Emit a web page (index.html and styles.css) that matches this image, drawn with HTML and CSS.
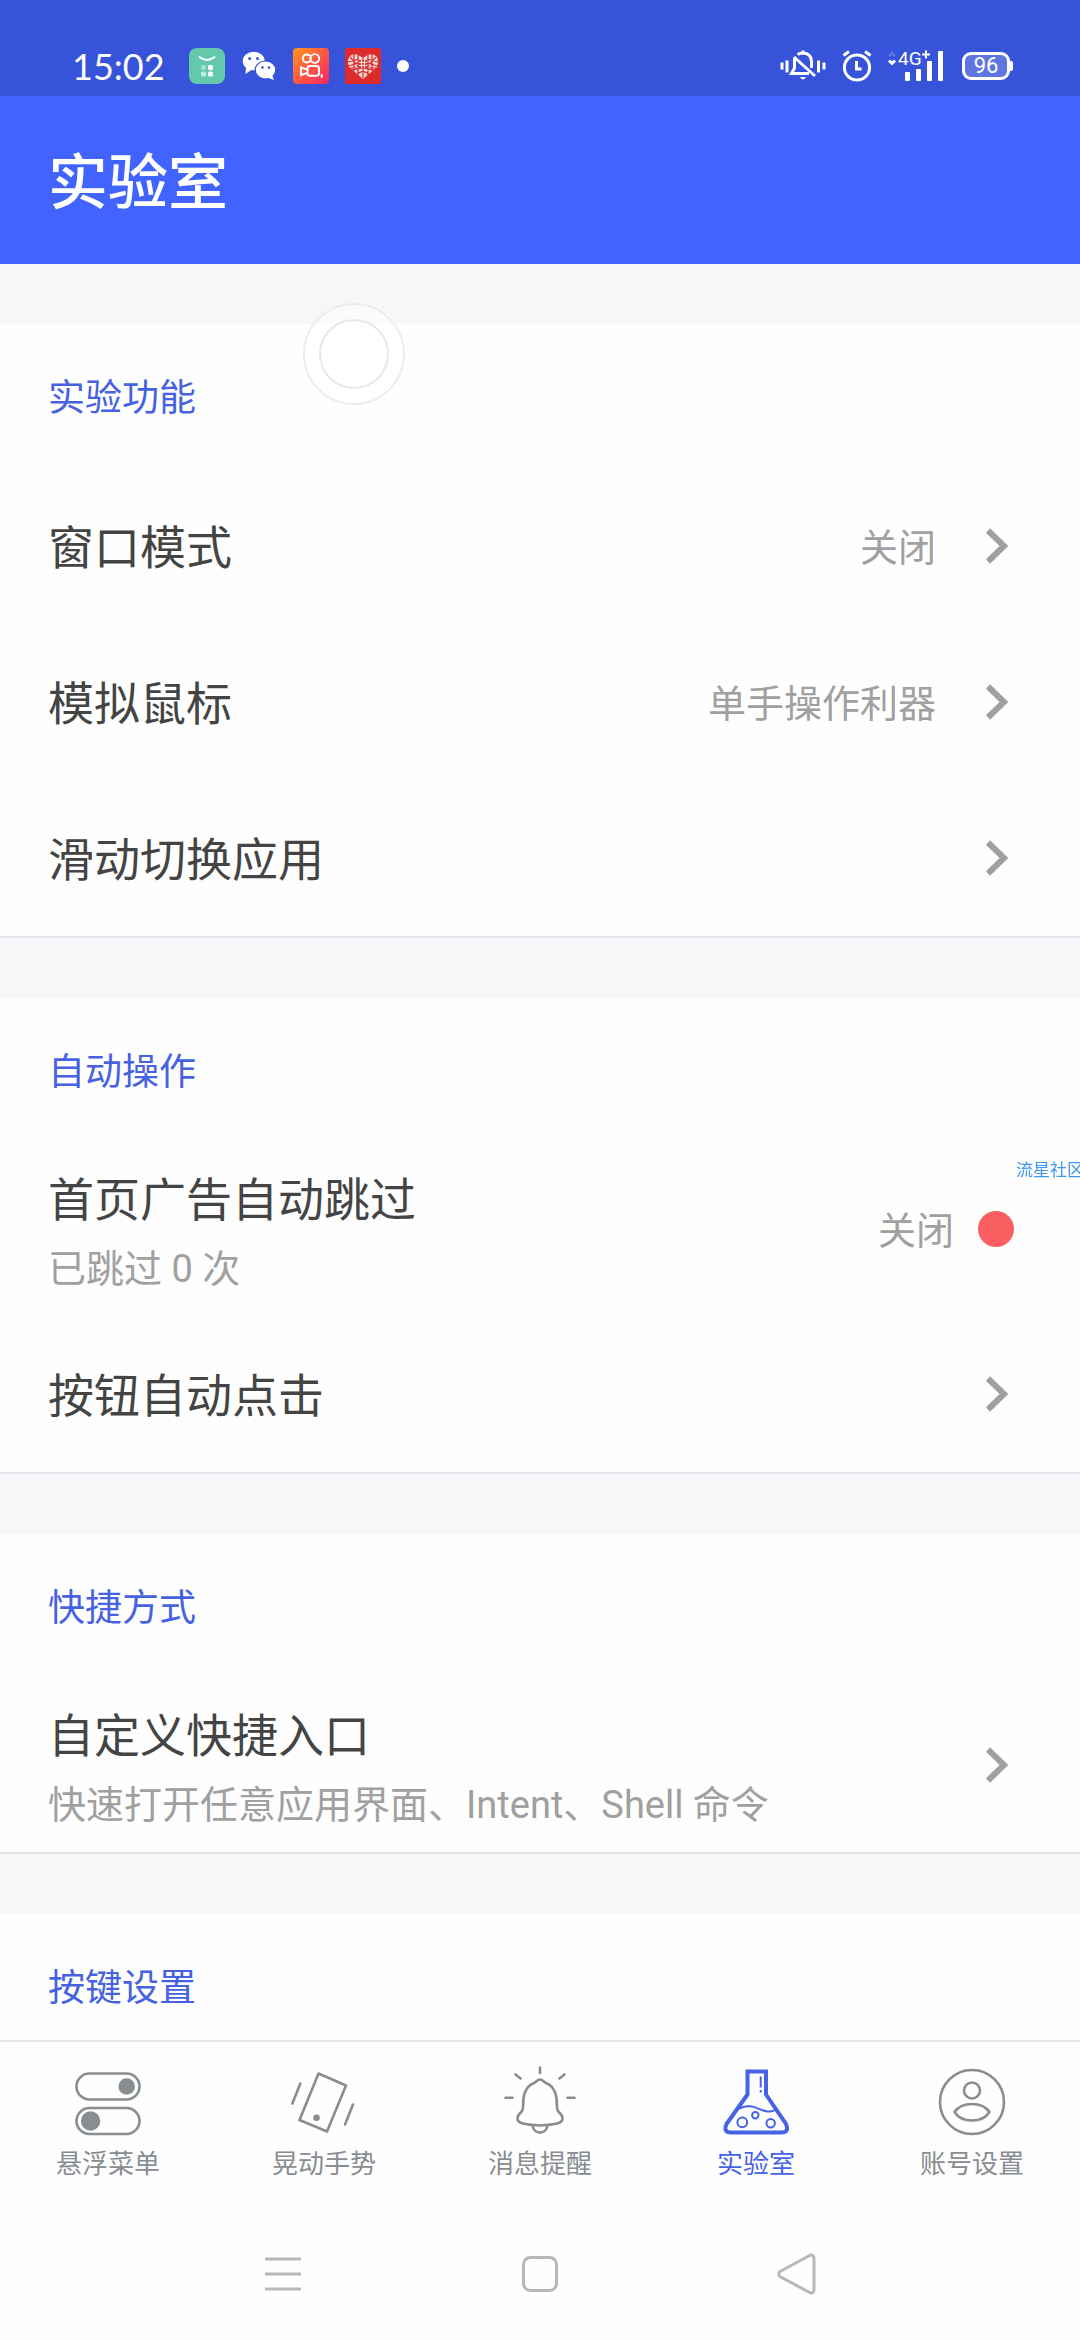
FILE: index.html
```html
<!DOCTYPE html>
<html lang="zh-CN">
<head>
<meta charset="utf-8">
<meta name="viewport" content="width=device-width, initial-scale=1">
<title>实验室</title>
<link rel="stylesheet" href="styles.css">
</head>
<body>
<div class="status-bar">
  <div class="status-group">
    <span class="clock">15:02</span>
    <svg class="app-icon" viewBox="0 0 36 36" aria-hidden="true">
      <rect width="36" height="36" rx="8" fill="#62c9ab"/>
      <path d="M10.500 9Q18 15 25.500 9" fill="none" stroke="#fff" stroke-width="2" stroke-linecap="round"/>
      <rect x="12" y="17" width="5" height="5" rx="1.500" fill="#a5e0cf"/>
      <rect x="19" y="17" width="5" height="5" rx="1.500" fill="#fff"/>
      <rect x="12" y="23.500" width="5" height="5" rx="1.500" fill="#c2eadf"/>
      <rect x="19" y="23.500" width="5" height="5" rx="1.500" fill="#fff"/>
    </svg>
    <svg class="app-icon" viewBox="0 0 36 36" aria-hidden="true">
      <ellipse cx="12.700" cy="13" rx="11" ry="9.300" fill="#fff"/>
      <path d="M5 19L4.500 26L11 21.500z" fill="#fff"/>
      <circle cx="8.700" cy="10.500" r="1.500" fill="#3753d9"/><circle cx="16.500" cy="10.500" r="1.500" fill="#3753d9"/>
      <ellipse cx="24.500" cy="22" rx="10.300" ry="9" fill="#fff" stroke="#3753d9" stroke-width="1.200"/>
      <path d="M26 29.500L33 32L31 27z" fill="#fff"/>
      <circle cx="21.500" cy="19.500" r="1.300" fill="#3753d9"/><circle cx="28" cy="19.500" r="1.300" fill="#3753d9"/>
    </svg>
    <svg class="app-icon" viewBox="0 0 36 36" aria-hidden="true">
      <defs><linearGradient id="warm" x1="0" y1="0" x2="1" y2="1"><stop offset="0" stop-color="#ff961c"/><stop offset=".5" stop-color="#fb5a45"/><stop offset="1" stop-color="#f8265f"/></linearGradient></defs>
      <rect width="36" height="36" rx="4" fill="url(#warm)"/>
      <g fill="none" stroke="#fff" stroke-width="1.900">
        <circle cx="13.800" cy="10.500" r="4"/><circle cx="21.800" cy="10.500" r="4.400"/>
        <rect x="14.500" y="18" width="11.500" height="9.800" rx="2.500"/>
        <path d="M14.500 21.500L8 19.500V27L14.500 25"/>
      </g>
      <path d="M27.500 26.500h2.500q.5 2.500-2 4z" fill="#fff"/>
    </svg>
    <svg class="app-icon" viewBox="0 0 36 36" aria-hidden="true">
      <rect width="36" height="36" rx="2" fill="#dd2b2c"/>
      <path d="M18 31L4 19Q1.500 12 5 8Q10 3.500 18 10Q26 3.500 31 8Q34.500 12 32 19z" fill="#f6d8d2"/>
      <path d="M9 6V23M13 7V27M23 7V27M27 6V23M3 14L14 11M3 18L14 15M33 14L22 11M33 18L22 15M5 9L14 19M31 9L22 19M7 22L18 20L29 22M12 26L18 23L24 26M18 10V12M18 21V30M5 20L12 20M31 20H24" fill="none" stroke="#d92a2b" stroke-width="1.200"/>
      <path d="M14 12h8v8h-8z" fill="#d92a2b"/>
      <path d="M16.500 12V20M19.500 12V20M14 14.500H22M14 17.500H22" stroke="#fbe4df" stroke-width="1.200"/>
    </svg>
    <span class="more-dot"></span>
  </div>
  <div class="status-group">
    <svg width="46" height="32" viewBox="0 0 46 32" aria-hidden="true">
      <g fill="none" stroke="#fff" stroke-width="3">
        <path d="M2 12.500V19.500M7 10.500V22.500M38.500 10.500V22.500M44 12.500V19.500"/>
        <path d="M17.500 4.500Q20 3 23 3Q31 3.500 31.500 11V18"/>
        <path d="M23 .5V3M14.500 8.500V18L11.500 23.500H29M14 7L35 26"/>
      </g>
      <path d="M20 27h6q-3 5-6 0z" fill="#fff"/>
    </svg>
    <svg width="30" height="32" viewBox="0 0 30 32" aria-hidden="true">
      <g fill="none" stroke="#fff" stroke-width="3">
        <circle cx="15" cy="17.500" r="12.600"/><path d="M14.500 11V19H19.500M1.500 5.500L7 1.500M28.500 5.500L23 1.500"/>
      </g>
    </svg>
    <svg class="signal" width="58" height="32" viewBox="0 0 58 32" aria-hidden="true">
      <path d="M1 6.500L4 3L7 6.500" fill="none" stroke="#6478e4" stroke-width="2.200"/>
      <path d="M1 10.500L4 13.500L7 10.500" fill="none" stroke="#fff" stroke-width="3"/>
      <text class="network" x="10" y="15">4G</text>
      <path d="M38 .5V8.500M34 4.500H42" stroke="#fff" stroke-width="2"/>
      <g fill="#fff"><rect x="17" y="22" width="5" height="9" rx="1"/><rect x="28" y="19" width="5" height="12" rx="1"/><rect x="39" y="11" width="5" height="20" rx="1"/><rect x="50" y="1" width="5" height="30" rx="1"/></g>
    </svg>
    <span class="battery">96</span>
  </div>
</div>

<header class="app-header"><h1>实验室</h1></header>

<main class="settings">
  <section class="card">
    <h2>实验功能</h2>
    <button class="row" type="button">
      <span class="row-text"><span class="label">窗口模式</span></span>
      <span class="value">关闭</span>
      <svg class="mark" viewBox="0 0 36 36" aria-hidden="true"><path d="M10 2.500L26 18L10 33.500"/></svg>
    </button>
    <button class="row" type="button">
      <span class="row-text"><span class="label">模拟鼠标</span></span>
      <span class="value">单手操作利器</span>
      <svg class="mark" viewBox="0 0 36 36" aria-hidden="true"><path d="M10 2.500L26 18L10 33.500"/></svg>
    </button>
    <button class="row" type="button">
      <span class="row-text"><span class="label">滑动切换应用</span></span>
      <svg class="mark" viewBox="0 0 36 36" aria-hidden="true"><path d="M10 2.500L26 18L10 33.500"/></svg>
    </button>
  </section>

  <section class="card">
    <h2>自动操作</h2>
    <button class="row row-tall" type="button">
      <span class="row-text"><span class="label">首页广告自动跳过</span><span class="note">已跳过 0 次</span></span>
      <span class="value value-state">关闭</span>
      <span class="off-dot"></span>
    </button>
    <button class="row" type="button">
      <span class="row-text"><span class="label">按钮自动点击</span></span>
      <svg class="mark" viewBox="0 0 36 36" aria-hidden="true"><path d="M10 2.500L26 18L10 33.500"/></svg>
    </button>
  </section>

  <section class="card">
    <h2>快捷方式</h2>
    <button class="row row-tall" type="button">
      <span class="row-text"><span class="label">自定义快捷入口</span><span class="note">快速打开任意应用界面、Intent、Shell 命令</span></span>
      <svg class="mark" viewBox="0 0 36 36" aria-hidden="true"><path d="M10 2.500L26 18L10 33.500"/></svg>
    </button>
  </section>

  <section class="card">
    <h2>按键设置</h2>
  </section>
</main>

<nav class="tabs">
  <a class="tab" href="#menu">
    <svg class="tab-icon" viewBox="0 0 76 76" aria-hidden="true">
      <rect x="6.500" y="9.500" width="63" height="26" rx="13"/><rect x="6.500" y="44" width="63" height="26" rx="13"/>
      <circle class="solid" cx="56.700" cy="22.500" r="8.300"/><circle class="solid" cx="20.600" cy="57" r="9.700"/>
    </svg>
    <span>悬浮菜单</span>
  </a>
  <a class="tab" href="#shake">
    <svg class="tab-icon" viewBox="0 0 76 76" aria-hidden="true">
      <path d="M32.500 9.500L60 21.500L41 67.500L13.500 56z"/><circle class="solid" cx="30.500" cy="53.700" r="3.300"/>
      <path d="M14.300 19.500L6.400 39.500M67 40.500L59 60.500"/>
    </svg>
    <span>晃动手势</span>
  </a>
  <a class="tab" href="#alerts">
    <svg class="tab-icon" viewBox="0 0 76 76" aria-hidden="true">
      <path d="M38 3.500V9M13.500 10.500L18.500 14.500M62.500 10.500L57.500 14.500M3.500 33.700H10.500M65.500 33.700H72.500"/>
      <path d="M38 15.500C35.500 15.500 35 17 33 18.500C26 21 22.500 26 21.500 34C21 39 21.500 45 20 47C17 50 15.500 51.500 15.500 54.500C15.500 59.500 22 60.500 38 61.500C54 60.500 60.500 59.500 60.500 54.500C60.500 51.500 59 50 56 47C54.500 45 55 39 54.500 34C53.500 26 50 21 43 18.500C41 17 40.500 15.500 38 15.500z"/>
      <path d="M30.500 61.500C32 71 44 71 45.500 61.500"/>
    </svg>
    <span>消息提醒</span>
  </a>
  <a class="tab tab-active" href="#lab" aria-current="page">
    <svg class="tab-icon" viewBox="0 0 76 76" aria-hidden="true">
      <path class="bold" d="M29.500 7.500H48V30.500L68 60Q71.500 68.500 63.500 68.500H13Q5 68.500 8.500 60L29.500 30.500z"/>
      <path class="fine" d="M21.500 44.500C34 38 42 47.500 50 47.500Q54 48 57 46M42.700 12.500V23.500M42.700 26V28.500"/>
      <circle class="fine" cx="24.300" cy="58.300" r="4.900"/><circle class="fine" cx="37.300" cy="51.300" r="3.200"/><circle class="fine" cx="52.700" cy="59.300" r="4.200"/>
    </svg>
    <span>实验室</span>
  </a>
  <a class="tab" href="#account">
    <svg class="tab-icon" viewBox="0 0 76 76" aria-hidden="true">
      <circle cx="38" cy="38" r="32"/><circle cx="38" cy="26.500" r="8"/>
      <path d="M20.500 48Q26 40 38 40T55.500 48Q50 56.500 38 56.500T20.500 48z"/>
    </svg>
    <span>账号设置</span>
  </a>
</nav>

<div class="system-nav">
  <button type="button" aria-label="最近任务"><svg viewBox="0 0 40 44"><path d="M2 7H38M2 22H38M2 37H38"/></svg></button>
  <button type="button" aria-label="主页"><svg viewBox="0 0 40 44"><rect x="3.500" y="5.500" width="33" height="33" rx="7"/></svg></button>
  <button type="button" aria-label="返回"><svg viewBox="0 0 40 44"><path d="M3 19.500L32.500 3.500Q36.500 2 37 6V38Q36.500 42 32.500 40.500L3 24.500Q.5 22 3 19.500z"/></svg></button>
</div>

<div class="touch-ring"><span></span></div>
<div class="watermark">流星社区</div>
</body>
</html>
```

FILE: styles.css
```css
* { box-sizing: border-box; }

body {
  margin: 0;
  height: 100vh;
  display: flex;
  flex-direction: column;
  position: relative;
  overflow: hidden;
  background: #fefefe;
  color: #444;
  font-family: Roboto, "Noto Sans CJK SC", sans-serif;
}

h1, h2 { margin: 0; }

button {
  border: 0;
  padding: 0;
  background: none;
  color: inherit;
  font: inherit;
  text-align: left;
}

.status-bar {
  display: flex;
  justify-content: space-between;
  flex: none;
  height: 96px;
  padding: 36px 68px 0 72px;
  background: #3753d9;
  color: #fff;
}

.status-group {
  display: flex;
  align-items: center;
  gap: 16px;
}

.clock {
  width: 101px;
  font: 36px/60px Lato, sans-serif;
}

.app-icon { width: 36px; height: 36px; }

.more-dot {
  width: 12px;
  height: 12px;
  border-radius: 50%;
  background: #fff;
}

.signal { overflow: visible; }

.network {
  font: 19px Roboto, sans-serif;
  fill: #fff;
}

.battery {
  position: relative;
  width: 48px;
  height: 28px;
  margin-right: 2px;
  border: 3px solid #fff;
  border-radius: 9px;
  background: #5f75df;
  font: 22px/22px Roboto, sans-serif;
  text-align: center;
}

.battery::after {
  content: "";
  position: absolute;
  top: 6px;
  right: -6px;
  width: 3px;
  height: 10px;
  border-radius: 0 2px 2px 0;
  background: #fff;
}

.app-header {
  flex: none;
  padding: 52px 48px 44px;
  background: #4163ff;
  color: #fff;
}

.app-header h1 {
  font-size: 60px;
  font-weight: 500;
  line-height: 72px;
}

.settings {
  flex: 1;
  min-height: 0;
  padding-top: 60px;
  overflow: auto;
  scrollbar-width: none;
  background: #f5f7f9;
}

.card {
  margin-bottom: 60px;
  border-bottom: 2px solid #e1e4e8;
  background: #fefefe;
}

.card h2 {
  padding: 45px 48px 39px;
  color: #4662e2;
  font-size: 37px;
  font-weight: 400;
  line-height: 60px;
}

.row {
  display: flex;
  align-items: center;
  width: 100%;
  min-height: 156px;
  padding: 0 66px 0 48px;
}

.row-tall { min-height: 174px; }

.row-text {
  display: flex;
  flex-direction: column;
  flex: 1;
  padding-top: 4px;
}

.label { font-size: 46px; line-height: 76px; }

.note {
  color: #a0a0a0;
  font-size: 38px;
  line-height: 62px;
}

.value {
  padding-top: 4px;
  margin-right: 42px;
  color: #a0a0a0;
  font-size: 38px;
  line-height: 62px;
}

.value-state { margin-right: 24px; }

.mark {
  width: 36px;
  height: 36px;
  fill: none;
  stroke: #a0a0a0;
  stroke-width: 6;
}

.off-dot {
  width: 36px;
  height: 36px;
  border-radius: 50%;
  background: #f95f61;
}

.tabs {
  display: flex;
  flex: none;
  border-top: 2px solid #e4e4e4;
}

.tab {
  display: flex;
  flex: 1;
  flex-direction: column;
  align-items: center;
  padding: 22px 0 20px;
  color: #888d91;
  font-size: 26px;
  line-height: 48px;
  text-decoration: none;
}

.tab-active { color: #4662e6; }

.tab-icon {
  width: 76px;
  height: 76px;
  fill: none;
  stroke: currentColor;
  stroke-width: 2.600;
  stroke-linecap: round;
  stroke-linejoin: round;
}

.tab-icon .solid { fill: currentColor; stroke: none; }
.tab-icon .bold { stroke-width: 4; stroke-linejoin: miter; }
.tab-icon .fine { stroke-width: 2; stroke-linecap: butt; }

.system-nav {
  display: flex;
  flex: none;
  justify-content: center;
  gap: 217px;
  padding: 44px 0;
}

.system-nav svg {
  display: block;
  width: 40px;
  height: 44px;
  fill: none;
  stroke: #b7b7b7;
  stroke-width: 3;
}

/* Floating overlays above the page */
.touch-ring {
  position: absolute;
  top: 303px;
  left: 303px;
  display: grid;
  place-items: center;
  width: 102px;
  height: 102px;
  border: 2px solid #ececec;
  border-radius: 50%;
  background: rgba(255, 255, 255, 0.5);
}

.touch-ring span {
  width: 70px;
  height: 70px;
  border: 2px solid #e8e8e8;
  border-radius: 50%;
  background: rgba(255, 255, 255, 0.7);
}

.watermark {
  position: absolute;
  top: 1157px;
  left: 1016px;
  color: #3f96ee;
  font-size: 17px;
  line-height: 26px;
  white-space: nowrap;
}
```
